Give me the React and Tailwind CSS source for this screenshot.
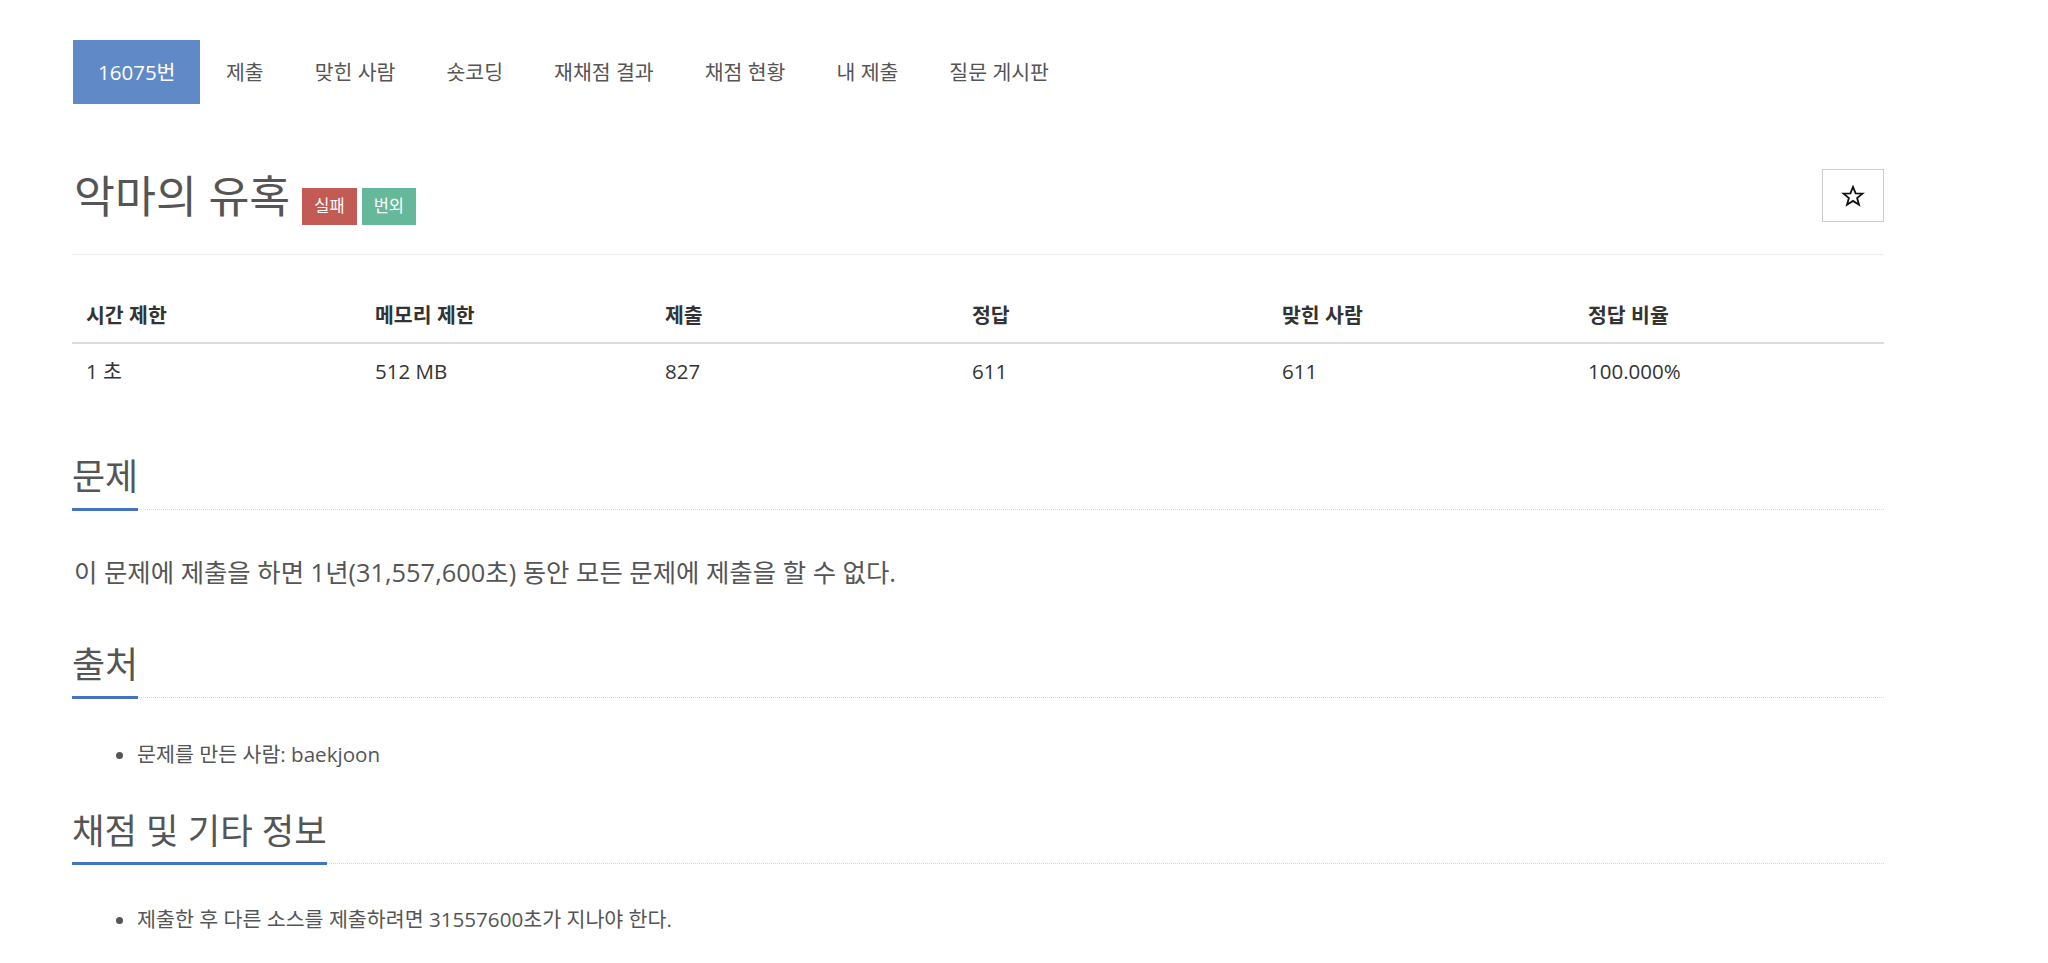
const tabs = ["제출", "맞힌 사람", "숏코딩", "재채점 결과", "채점 현황", "내 제출", "질문 게시판"];

const stats = [
  ["시간 제한", "1 초"],
  ["메모리 제한", "512 MB"],
  ["제출", "827"],
  ["정답", "611"],
  ["맞힌 사람", "611"],
  ["정답 비율", "100.000%"],
];

function Headline({ children }) {
  return (
    <div className="flex border-b border-dotted border-[#d8d8d8]">
      <span className="-mb-[2px] border-b-[3px] border-[#4573c4] pb-[9px] text-[36px] leading-[44px] text-[#555]">
        {children}
      </span>
    </div>
  );
}

function StarIcon() {
  return (
    <svg width="24" height="24" viewBox="0 0 24 24" fill="none" stroke="#111" strokeWidth="1.8" strokeLinejoin="miter">
      <polygon points="12,2.8 14.6,9.3 21.5,9.6 16.1,14 18,20.8 12,16.9 6,20.8 7.9,14 2.5,9.6 9.4,9.3" />
    </svg>
  );
}

export default function App() {
  return (
    <div className="min-h-screen bg-white font-['Open_Sans','Noto_Sans_CJK_KR',sans-serif] text-[#555]">
      <div className="ml-[72px] w-[1812px]">
        {/* problem menu */}
        <nav className="mt-[40px] flex h-[64px] text-[20.5px]">
          <div className="ml-px flex items-center bg-[#5f8ac7] px-[25px] text-white">16075번</div>
          {tabs.map((t) => (
            <div key={t} className="flex items-center px-[25.5px] text-[#555]">
              {t}
            </div>
          ))}
        </nav>

        {/* title */}
        <div className="mt-[65px] flex justify-between border-b border-[#eee] pb-[29px]">
          <div className="flex items-start">
            <h1 className="pl-[2px] text-[44.5px] leading-[53px] text-[#555]">악마의 유혹</h1>
            <span className="ml-[12px] mt-[19px] flex h-[37px] items-center bg-[#c25b53] px-[12px] text-[16.5px] text-white">
              실패
            </span>
            <span className="ml-[5px] mt-[19px] flex h-[37px] items-center bg-[#66b89a] px-[12px] text-[16.5px] text-white">
              번외
            </span>
          </div>
          <button className="flex h-[53px] w-[62px] items-center justify-center border border-[#ccc] bg-white">
            <StarIcon />
          </button>
        </div>

        {/* info table */}
        <div className="mt-[35px] grid grid-cols-[289px_290px_307px_310px_306px_1fr] border-b-2 border-[#ddd] text-[20.5px] font-bold text-[#333]">
          {stats.map(([h]) => (
            <div key={h} className="pl-[14px] pt-[12px] pb-[13px] leading-[27px]">
              {h}
            </div>
          ))}
        </div>
        <div className="grid grid-cols-[289px_290px_307px_310px_306px_1fr] text-[20.5px] text-[#333]">
          {stats.map(([h, v]) => (
            <div key={h} className="py-[14px] pl-[14px] leading-[27px]">
              {v}
            </div>
          ))}
        </div>

        {/* 문제 */}
        <section className="mt-[56px]">
          <Headline>문제</Headline>
          <p className="mt-[44px] pl-[2px] text-[25.4px] leading-[36px]">
            이 문제에 제출을 하면 1년(31,557,600초) 동안 모든 문제에 제출을 할 수 없다.
          </p>
        </section>

        {/* 출처 */}
        <section className="mt-[53px]">
          <Headline>출처</Headline>
          <ul className="mt-[42px] list-disc pl-[65px] text-[20.6px] leading-[28px]">
            <li>문제를 만든 사람: baekjoon</li>
          </ul>
        </section>

        {/* 채점 및 기타 정보 */}
        <section className="mt-[40px]">
          <Headline>
            <span className="text-[35.3px]">채점 및 기타 정보</span>
          </Headline>
          <ul className="mt-[41px] list-disc pl-[65px] text-[20.6px] leading-[28px]">
            <li>제출한 후 다른 소스를 제출하려면 31557600초가 지나야 한다.</li>
          </ul>
        </section>
      </div>
    </div>
  );
}
